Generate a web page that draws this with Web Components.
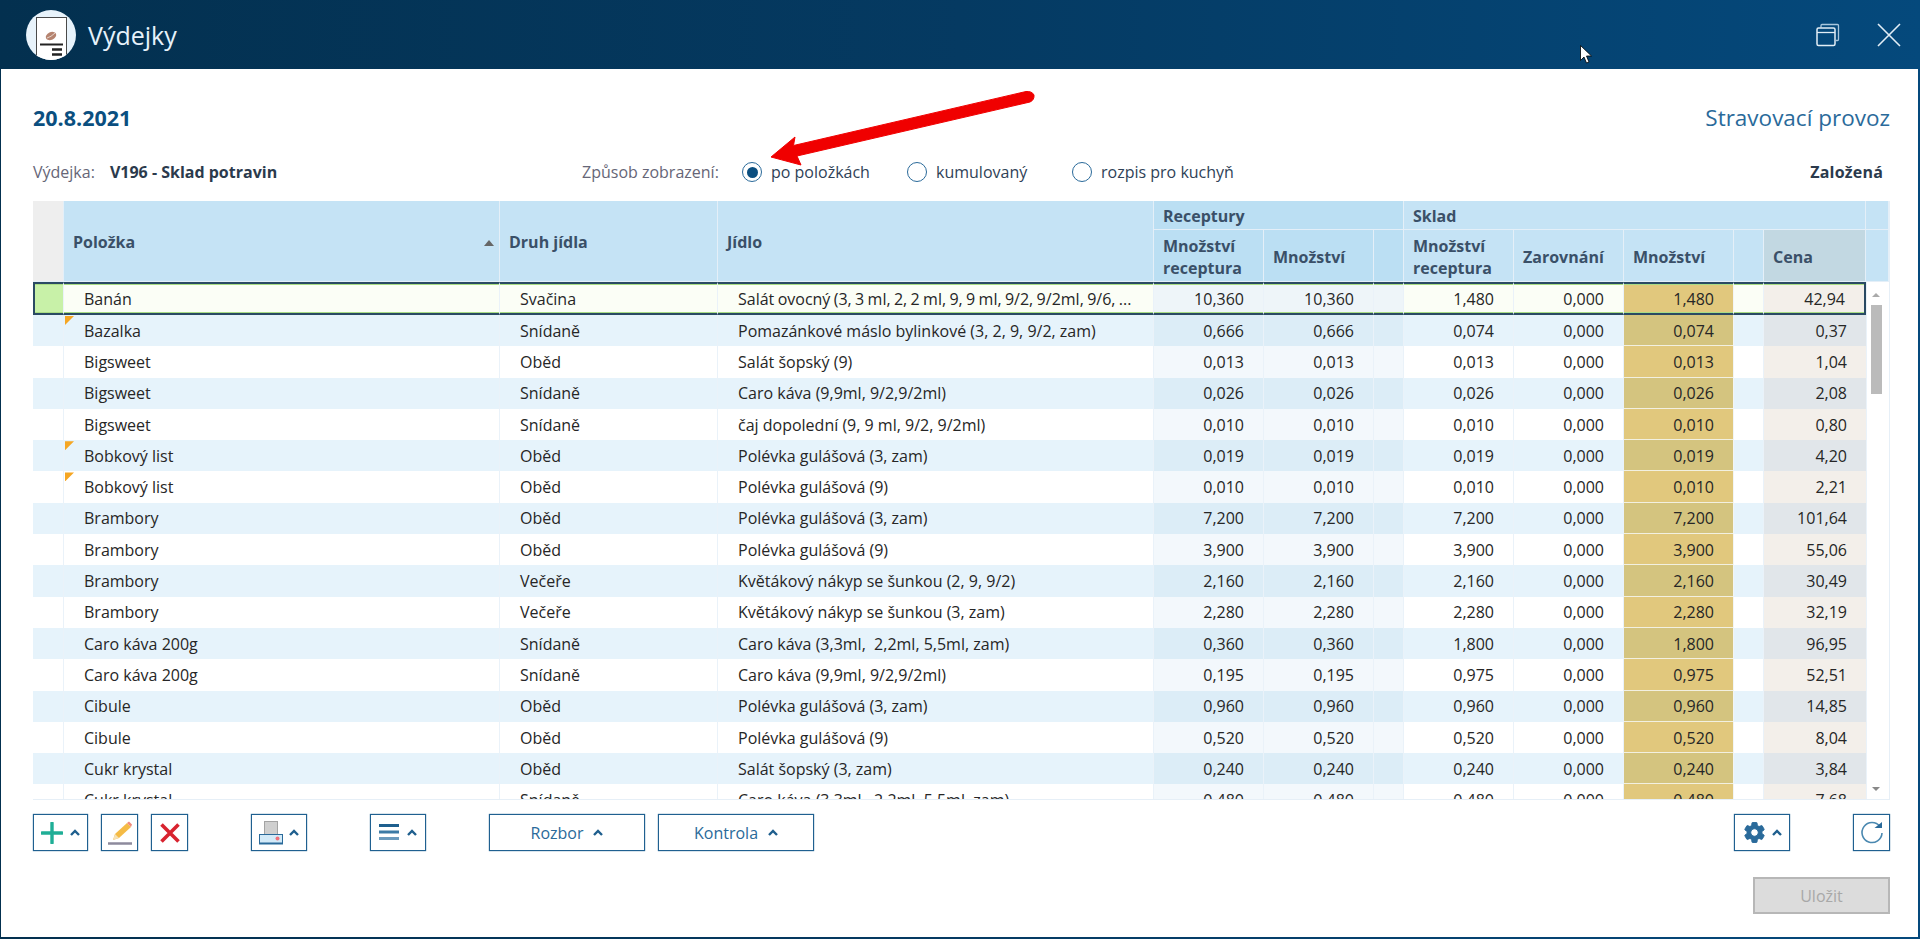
<!DOCTYPE html>
<html lang="cs">
<head>
<meta charset="utf-8">
<title>Výdejky</title>
<style>
  html, body { margin: 0; height: 939px; overflow: hidden; }
  body { font: 16px "Open Sans", "Liberation Sans", sans-serif; color: #222; }
  svg { display: block; }
</style>
</head>
<body>

<app-window>
  <title-bar slot="top" heading="Výdejky"></title-bar>

  <page-head date="20.8.2021" place="Stravovací provoz"></page-head>
  <doc-options number="V196 - Sklad potravin" state="Založená">
    <radio-option checked>po položkách</radio-option>
    <radio-option>kumulovaný</radio-option>
    <radio-option>rozpis pro kuchyň</radio-option>
  </doc-options>

  <data-grid></data-grid>

  <tool-bar>
    <tool-group>
      <tool-button caret style="width:55px" gap="7">
        <svg width="22" height="22" viewBox="0 0 22 22"><path d="M11 1v20M1 11h20" stroke="#1fae96" stroke-width="3.400" stroke-linecap="round"/></svg>
      </tool-button>
      <tool-button style="width:37px">
        <svg width="26" height="26" viewBox="0 0 26 26">
          <path d="M1 23.500h24" stroke="#8d8a9c" stroke-width="2.500"/>
          <path d="M6 20l2-6L20 3l4 4L12 18z" fill="#f5bb45"/>
          <path d="M20 3l2-1.500 3 3L24 7z" fill="#f08a7c"/>
          <path d="M6 20l2-6 4 4z" fill="#f6e2b5"/>
        </svg>
      </tool-button>
      <tool-button style="width:37px">
        <svg width="20" height="20" viewBox="0 0 20 20"><path d="M1.500 1.500l17 17M18.500 1.500l-17 17" stroke="#d8232f" stroke-width="3.600"/></svg>
      </tool-button>
    </tool-group>
    <tool-group>
      <tool-button caret style="width:56px" gap="6">
        <svg width="24" height="24" viewBox="0 0 24 24">
          <rect x="5.500" y="0.500" width="13" height="14" fill="#cfcfcf" stroke="#a3a3a3"/>
          <rect x="0.500" y="13.500" width="23" height="9" fill="#d3eaf8" stroke="#2a6a9a"/>
          <path d="M0 22.500h24" stroke="#2a6a9a" stroke-width="2"/>
          <circle cx="18.500" cy="17.500" r="2" fill="#f0707a"/>
        </svg>
      </tool-button>
    </tool-group>
    <tool-group>
      <tool-button caret style="width:56px" gap="8">
        <svg width="20" height="17" viewBox="0 0 20 17"><path d="M0 1.500h20" stroke="#1e5f8e" stroke-width="3"/><path d="M0 8h20" stroke="#3c7aa5" stroke-width="3"/><path d="M0 14.500h20" stroke="#6a9abd" stroke-width="3"/></svg>
      </tool-button>
    </tool-group>
    <tool-group>
      <tool-button caret style="width:156px" gap="10">Rozbor</tool-button>
      <tool-button caret style="width:156px" gap="10">Kontrola</tool-button>
    </tool-group>
    <tool-group style="margin-left:auto">
      <tool-button caret style="width:56px" gap="5">
        <svg width="25" height="25" viewBox="0 0 24 24"><path fill="#2a6a9a" stroke="#2a6a9a" stroke-width=".9" d="M19.140 12.940c.04-.3.06-.61.06-.94 0-.32-.02-.64-.07-.94l2.030-1.580c.18-.14.23-.41.12-.61l-1.920-3.320c-.12-.22-.37-.29-.59-.22l-2.390.96c-.5-.38-1.030-.7-1.620-.94l-.36-2.540c-.04-.24-.24-.41-.48-.41h-3.840c-.24 0-.43.17-.47.41l-.36 2.540c-.59.24-1.130.57-1.620.94l-2.390-.96c-.22-.08-.47 0-.59.22L2.740 8.870c-.12.21-.08.47.12.61l2.030 1.580c-.05.3-.09.63-.09.94s.02.64.07.94l-2.030 1.580c-.18.14-.23.41-.12.61l1.920 3.320c.12.22.37.29.59.22l2.390-.96c.5.38 1.030.7 1.620.94l.36 2.540c.05.24.24.41.48.41h3.840c.24 0 .44-.17.47-.41l.36-2.540c.59-.24 1.130-.56 1.620-.94l2.390.96c.22.08.47 0 .59-.22l1.920-3.320c.12-.22.07-.47-.12-.61l-2.010-1.580zM12 15.600c-1.980 0-3.600-1.620-3.600-3.600s1.620-3.600 3.600-3.600 3.600 1.620 3.600 3.600-1.620 3.600-3.600 3.600z"/></svg>
      </tool-button>
    </tool-group>
    <tool-group>
      <tool-button style="width:37px">
        <svg width="24" height="24" viewBox="0 0 24 24"><path d="M20 5.500A10 10 0 1 0 22 12" fill="none" stroke="#4a88b0" stroke-width="1.600"/><path d="M14.500 6h7.500V0z" fill="#2a6a9a" transform="translate(0 1)"/></svg>
      </tool-button>
    </tool-group>
  </tool-bar>

  <save-row><save-button>Uložit</save-button></save-row>

  <red-arrow slot="over"></red-arrow>
  <mouse-cursor slot="over"></mouse-cursor>
</app-window>

<script>
const COLS = '31px 436px 218px 436px 110px 110px 30px 110px 110px 110px 30px 102px'

const ROWS = [
  ['Banán', 'Svačina', 'Salát ovocný (3, 3 ml, 2, 2 ml, 9, 9 ml, 9/2, 9/2ml, 9/6, ...', '10,360', '10,360', '1,480', '0,000', '1,480', '42,94'],
  ['Bazalka', 'Snídaně', 'Pomazánkové máslo bylinkové (3, 2, 9, 9/2, zam)', '0,666', '0,666', '0,074', '0,000', '0,074', '0,37', 1],
  ['Bigsweet', 'Oběd', 'Salát šopský (9)', '0,013', '0,013', '0,013', '0,000', '0,013', '1,04'],
  ['Bigsweet', 'Snídaně', 'Caro káva (9,9ml, 9/2,9/2ml)', '0,026', '0,026', '0,026', '0,000', '0,026', '2,08'],
  ['Bigsweet', 'Snídaně', 'čaj dopolední (9, 9 ml, 9/2, 9/2ml)', '0,010', '0,010', '0,010', '0,000', '0,010', '0,80'],
  ['Bobkový list', 'Oběd', 'Polévka gulášová (3, zam)', '0,019', '0,019', '0,019', '0,000', '0,019', '4,20', 1],
  ['Bobkový list', 'Oběd', 'Polévka gulášová (9)', '0,010', '0,010', '0,010', '0,000', '0,010', '2,21', 1],
  ['Brambory', 'Oběd', 'Polévka gulášová (3, zam)', '7,200', '7,200', '7,200', '0,000', '7,200', '101,64'],
  ['Brambory', 'Oběd', 'Polévka gulášová (9)', '3,900', '3,900', '3,900', '0,000', '3,900', '55,06'],
  ['Brambory', 'Večeře', 'Květákový nákyp se šunkou (2, 9, 9/2)', '2,160', '2,160', '2,160', '0,000', '2,160', '30,49'],
  ['Brambory', 'Večeře', 'Květákový nákyp se šunkou (3, zam)', '2,280', '2,280', '2,280', '0,000', '2,280', '32,19'],
  ['Caro káva 200g', 'Snídaně', 'Caro káva (3,3ml,  2,2ml, 5,5ml, zam)', '0,360', '0,360', '1,800', '0,000', '1,800', '96,95'],
  ['Caro káva 200g', 'Snídaně', 'Caro káva (9,9ml, 9/2,9/2ml)', '0,195', '0,195', '0,975', '0,000', '0,975', '52,51'],
  ['Cibule', 'Oběd', 'Polévka gulášová (3, zam)', '0,960', '0,960', '0,960', '0,000', '0,960', '14,85'],
  ['Cibule', 'Oběd', 'Polévka gulášová (9)', '0,520', '0,520', '0,520', '0,000', '0,520', '8,04'],
  ['Cukr krystal', 'Oběd', 'Salát šopský (3, zam)', '0,240', '0,240', '0,240', '0,000', '0,240', '3,84'],
  ['Cukr krystal', 'Snídaně', 'Caro káva (3,3ml,  2,2ml, 5,5ml, zam)', '0,480', '0,480', '0,480', '0,000', '0,480', '7,68'],
]

const CARET = `<svg width="10" height="7" viewBox="0 0 10 7"><path d="M1 6l4-4 4 4" fill="none" stroke="#1f5f8e" stroke-width="2.400"/></svg>`

class AppWindow extends HTMLElement {
  constructor() {
    super()
    this.attachShadow({mode: 'open'}).innerHTML = `
      <style>
        :host {
          display: flex; flex-direction: column; position: relative;
          width: 1920px; height: 939px; box-sizing: border-box;
          padding: 0 2px 2px 1px;
          background: linear-gradient(90deg, #03304f 0%, #053a62 50%, #05497c 100%);
        }
        main {
          flex: 1; display: flex; flex-direction: column;
          background: #fff; padding: 34px 28px 0 32px;
        }
      </style>
      <slot name="top"></slot>
      <main><slot></slot></main>
      <slot name="over"></slot>`
  }
}

class TitleBar extends HTMLElement {
  constructor() {
    super()
    this.attachShadow({mode: 'open'}).innerHTML = `
      <style>
        :host { display: flex; align-items: center; height: 69px; box-sizing: border-box; padding: 0 17px 0 25px; }
        h1 { margin: 0 0 0 12px; font: 400 25px "Open Sans", sans-serif; color: #e6f2fb; }
        .acts { margin-left: auto; display: flex; align-items: center; gap: 37px; }
      </style>
      <svg width="50" height="50" viewBox="0 0 50 50" style="display:block">
        <defs><clipPath id="c"><circle cx="25" cy="25" r="25"/></clipPath></defs>
        <circle cx="25" cy="25" r="25" fill="#e8f3fb"/>
        <g clip-path="url(#c)">
          <rect x="10.500" y="7.500" width="30" height="46" fill="#fff" stroke="#4a4a4a"/>
          <ellipse cx="25" cy="26" rx="5.500" ry="3.800" fill="#b5836f" transform="rotate(-25 25 26)"/>
          <path d="M21 28q4-1 8-5" stroke="#e5d5cc" fill="none"/>
          <path d="M14 34.500h23" stroke="#222" stroke-width="2"/>
          <path d="M26 39.500h10M26 44.500h10" stroke="#222" stroke-width="2.400"/>
        </g>
      </svg>
      <h1></h1>
      <div class="acts">
        <svg width="24" height="24" viewBox="0 0 24 24" style="display:block">
          <path d="M5 4.500V2.500q0-1 1-1h15.500q1 0 1 1v14q0 1-1 1h-1.500" fill="none" stroke="#a9c6dc" stroke-width="1.300"/>
          <rect x="1" y="5" width="18" height="17.500" rx="1.500" fill="none" stroke="#e3eef6" stroke-width="1.500"/>
          <path d="M1 9.500h18" stroke="#e3eef6" stroke-width="1.300"/>
        </svg>
        <svg width="24" height="24" viewBox="0 0 24 24" style="display:block"><path d="M1 1l22 22M23 1L1 23" stroke="#e3eef6" stroke-width="1.600"/></svg>
      </div>`
    this.shadowRoot.querySelector('h1').textContent = this.getAttribute('heading')
  }
}

class PageHead extends HTMLElement {
  constructor() {
    super()
    this.attachShadow({mode: 'open'}).innerHTML = `
      <style>
        :host { display: flex; justify-content: space-between; align-items: center; height: 28px; }
        b { font: 700 21.500px "Open Sans", sans-serif; color: #0b4f80; }
        span { font: 400 22.500px "Open Sans", sans-serif; color: #2a6a9a; }
      </style>
      <b></b><span></span>`
    this.shadowRoot.querySelector('b').textContent = this.getAttribute('date')
    this.shadowRoot.querySelector('span').textContent = this.getAttribute('place')
  }
}

class DocOptions extends HTMLElement {
  constructor() {
    super()
    this.attachShadow({mode: 'open'}).innerHTML = `
      <style>
        :host { display: grid; grid-template-columns: 549px auto 1fr; align-items: center; height: 24px; margin: 29px 0 17px; font-size: 16px; }
        .lbl { color: #667; }
        .left b { margin-left: 15px; color: #2b3a4c; }
        .opts { display: flex; align-items: center; }
        .opts .lbl { width: 160px; }
        .state { justify-self: end; margin-right: 7px; font-weight: 700; color: #2b3a4c; letter-spacing: .2px; }
      </style>
      <div class="left"><span class="lbl">Výdejka:</span><b id="num"></b></div>
      <div class="opts"><span class="lbl">Způsob zobrazení:</span><slot></slot></div>
      <div class="state"></div>`
    this.shadowRoot.getElementById('num').textContent = this.getAttribute('number')
    this.shadowRoot.querySelector('.state').textContent = this.getAttribute('state')
  }
}

class RadioOption extends HTMLElement {
  constructor() {
    super()
    this.attachShadow({mode: 'open'}).innerHTML = `
      <style>
        :host { display: inline-flex; align-items: center; gap: 9px; width: 165px; color: #2f4257; font-size: 16px; white-space: nowrap; }
        i { flex: none; width: 20px; height: 20px; box-sizing: border-box; border: 1.500px solid #2a6a9a; border-radius: 50%; background: #fff; display: grid; place-items: center; }
        :host([checked]) i::after { content: ""; width: 11px; height: 11px; border-radius: 50%; background: #0b4f80; }
      </style>
      <i></i><slot></slot>`
  }
}

class DataGrid extends HTMLElement {
  constructor() {
    super()
    this.attachShadow({mode: 'open'}).innerHTML = `
      <style>
        :host { display: block; height: 599px; box-sizing: border-box; border-right: 1px solid #e6eff7; border-bottom: 1px solid #e6eff7; color: #3a5068; font-size: 16px; overflow: hidden; }
        .head { display: grid; grid-template-columns: ${COLS} 1fr; grid-template-rows: 29px 52px; height: 81px; background: #c5e3f5; font-weight: 700; }
        .head > div { display: flex; align-items: center; box-sizing: border-box; padding: 2px 0 0 9px; border-right: 1px solid #e4eff8; border-bottom: 1px solid #e4eff8; line-height: 22px; position: relative; }
        .tall { grid-row: 1 / 3; }
        .stub { background: #eeeeee; }
        .rec { background: #bbdff3; }
        .cena { background: #c2d8e2; }
        .sort { position: absolute; right: 5px; top: 39px; width: 0; height: 0; border: 5px solid transparent; border-top: 0; border-bottom: 6px solid #666; }
        .body { display: flex; height: 517px; }
        .rows { width: 1833px; overflow: hidden; }
        scroll-bar { flex: 1; }
      </style>
      <div class="head">
        <div class="tall stub"></div>
        <div class="tall">Položka<span class="sort"></span></div>
        <div class="tall">Druh jídla</div>
        <div class="tall">Jídlo</div>
        <div class="rec" style="grid-column: span 3">Receptury</div>
        <div style="grid-column: span 5">Sklad</div>
        <div></div>
        <div class="rec">Množství<br>receptura</div>
        <div class="rec">Množství</div>
        <div class="rec"></div>
        <div>Množství<br>receptura</div>
        <div>Zarovnání</div>
        <div>Množství</div>
        <div></div>
        <div class="cena">Cena</div>
        <div></div>
      </div>
      <div class="body">
        <div class="rows"></div>
        <scroll-bar></scroll-bar>
      </div>`
    const rows = this.shadowRoot.querySelector('.rows')
    ROWS.forEach((data, i) => {
      const row = document.createElement('grid-row')
      if (i === 0) row.setAttribute('selected', '')
      if (i % 2) row.setAttribute('alt', '')
      if (data[9]) row.setAttribute('flag', '')
      row.fill(data)
      rows.appendChild(row)
    })
  }
}

class GridRow extends HTMLElement {
  constructor() {
    super()
    this.attachShadow({mode: 'open'})
  }

  fill(d) {
    const cell = (cls, text = '') => `<div class="${cls}">${text}</div>`
    this.shadowRoot.innerHTML = `
      <style>
        :host {
          display: grid; grid-template-columns: ${COLS}; height: 31.300px;
          background: #fff; color: #262626; font-size: 16px;
          --rec: #f3f8fc; --qty: #e1c87d; --price: #f3efea;
        }
        :host([alt]) { background: #e6f3fb; --rec: #dcedf7; --qty: #d4c47f; --price: #e1e6ea; }
        :host([selected]) { height: 33px; background: #fbfef6; --rec: #eef5f9; }
        div { display: flex; align-items: center; box-sizing: border-box; min-width: 0; white-space: pre; border-right: 1px solid #eaf2f9; position: relative; }
        .t { padding-left: 20px; }
        .n { justify-content: flex-end; padding-right: 19px; }
        .rec { background: var(--rec); }
        .qty { background: var(--qty); border-right-color: #f2f5f5; box-shadow: inset 0 -1px #f2f0e0; }
        .price { background: var(--price); border-right: 0; }
        :host([flag]) .first::before { content: ""; position: absolute; left: 1px; top: 1px; width: 9px; height: 9px; background: #f5a623; clip-path: polygon(0 0, 100% 0, 0 100%); }
        :host([selected]) .t { word-spacing: -.8px; }
        :host([selected]) div { border-top: 2px solid #2a4a63; border-bottom: 2px solid #2a4a63; box-shadow: inset 0 1px #a9dc84, inset 0 -1px #a9dc84; }
        :host([selected]) .stub { background: #c8f1a8; border-left: 2px solid #2a4a63; border-right-color: #eaf2f9; }
        :host([selected]) .price { border-right: 2px solid #2a4a63; }
      </style>
      ${cell('stub')}${cell('t first', d[0])}${cell('t', d[1])}${cell('t', d[2])}
      ${cell('n rec', d[3])}${cell('n rec', d[4])}${cell('rec')}
      ${cell('n', d[5])}${cell('n', d[6])}${cell('n qty', d[7])}${cell('')}${cell('n price', d[8])}`
  }
}

class ScrollBar extends HTMLElement {
  constructor() {
    super()
    this.attachShadow({mode: 'open'}).innerHTML = `
      <style>
        :host { display: flex; flex-direction: column; align-items: center; background: #fff; border-left: 1px solid #eaf2f9; box-sizing: border-box; padding: 11px 4px 8px 0; }
        .up, .down { width: 0; height: 0; border: 4px solid transparent; }
        .up { border-top: 0; border-bottom: 4px solid #aaa; }
        .down { border-bottom: 0; border-top: 4px solid #888; margin-top: auto; }
        .thumb { width: 11px; height: 89px; margin-top: 8px; background: #bbb; }
      </style>
      <span class="up"></span><span class="thumb"></span><span class="down"></span>`
  }
}

class ToolBar extends HTMLElement {
  constructor() {
    super()
    this.attachShadow({mode: 'open'}).innerHTML = `
      <style>:host { display: flex; gap: 63px; margin-top: 14px; }</style>
      <slot></slot>`
  }
}

class ToolGroup extends HTMLElement {
  constructor() {
    super()
    this.attachShadow({mode: 'open'}).innerHTML = `
      <style>:host { display: flex; gap: 13px; }</style>
      <slot></slot>`
  }
}

class ToolButton extends HTMLElement {
  constructor() {
    super()
    const caret = this.hasAttribute('caret') ? CARET : ''
    this.attachShadow({mode: 'open'}).innerHTML = `
      <style>
        :host {
          display: flex; align-items: center; justify-content: center;
          height: 37px; box-sizing: border-box; gap: ${this.getAttribute('gap') || 0}px;
          border: 1px solid #1f6090; box-shadow: 0 0 1px #1f6090;
          color: #2a6a9a; font-size: 16px;
        }
      </style>
      <slot></slot>${caret}`
  }
}

class SaveRow extends HTMLElement {
  constructor() {
    super()
    this.attachShadow({mode: 'open'}).innerHTML = `
      <style>:host { display: flex; justify-content: flex-end; margin-top: 26px; }</style>
      <slot></slot>`
  }
}

class SaveButton extends HTMLElement {
  constructor() {
    super()
    this.attachShadow({mode: 'open'}).innerHTML = `
      <style>
        :host { display: flex; align-items: center; justify-content: center; width: 137px; height: 37px; box-sizing: border-box; background: #dcdcdc; border: 2px solid #b7b7b7; color: #a8a8a8; font-size: 16px; }
      </style>
      <slot></slot>`
  }
}

class RedArrow extends HTMLElement {
  constructor() {
    super()
    this.attachShadow({mode: 'open'}).innerHTML = `
      <style>:host { position: absolute; left: 760px; top: 85px; width: 285px; height: 90px; pointer-events: none; }</style>
      <svg width="285" height="90" viewBox="760 85 285 90" style="display:block">
        <path d="M771 157L795 137L793.500 145.500L1026 91.500Q1032 91 1034 95Q1034.500 100 1030 102L797 156L801 165z" fill="#f00000" stroke="#f00000" stroke-width="1" stroke-linejoin="round" style="filter:blur(.4px)"/>
      </svg>`
  }
}

class MouseCursor extends HTMLElement {
  constructor() {
    super()
    this.attachShadow({mode: 'open'}).innerHTML = `
      <style>:host { position: absolute; left: 1580px; top: 45px; width: 14px; height: 20px; }</style>
      <svg width="14" height="20" viewBox="0 0 14 20" style="display:block"><path d="M.5.500v15l3.500-3.500 2.500 6 2.500-1-2.500-6h5z" fill="#fff" stroke="#000" stroke-width=".8"/></svg>`
  }
}

customElements.define('scroll-bar', ScrollBar)
customElements.define('grid-row', GridRow)
customElements.define('app-window', AppWindow)
customElements.define('title-bar', TitleBar)
customElements.define('page-head', PageHead)
customElements.define('doc-options', DocOptions)
customElements.define('radio-option', RadioOption)
customElements.define('data-grid', DataGrid)
customElements.define('tool-bar', ToolBar)
customElements.define('tool-group', ToolGroup)
customElements.define('tool-button', ToolButton)
customElements.define('save-row', SaveRow)
customElements.define('save-button', SaveButton)
customElements.define('red-arrow', RedArrow)
customElements.define('mouse-cursor', MouseCursor)
</script>
</body>
</html>
